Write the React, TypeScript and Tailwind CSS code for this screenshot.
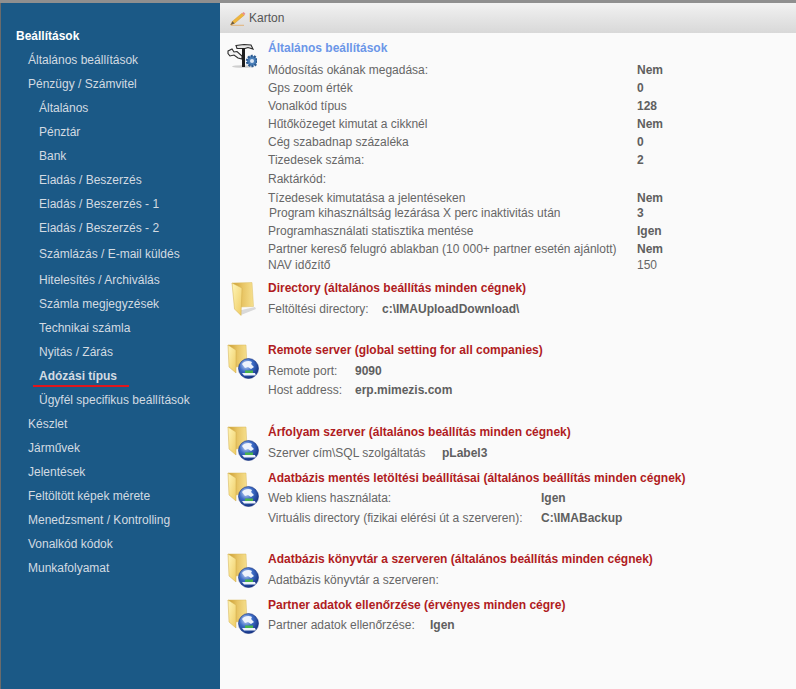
import type { ReactNode } from 'react'

const menu = [
  { label: 'Általános beállítások', level: 1, row: 'h-6' },
  { label: 'Pénzügy / Számvitel', level: 1, row: 'h-6' },
  { label: 'Általános', level: 2, row: 'h-6' },
  { label: 'Pénztár', level: 2, row: 'h-6' },
  { label: 'Bank', level: 2, row: 'h-6' },
  { label: 'Eladás / Beszerzés', level: 2, row: 'h-6' },
  { label: 'Eladás / Beszerzés - 1', level: 2, row: 'h-6' },
  { label: 'Eladás / Beszerzés - 2', level: 2, row: 'h-6' },
  { label: 'Számlázás / E-mail küldés', level: 2, row: 'h-[28px]' },
  { label: 'Hitelesítés / Archiválás', level: 2, row: 'h-6' },
  { label: 'Számla megjegyzések', level: 2, row: 'h-6' },
  { label: 'Technikai számla', level: 2, row: 'h-6' },
  { label: 'Nyitás / Zárás', level: 2, row: 'h-6' },
  { label: 'Adózási típus', level: 2, row: 'h-6', active: true },
  { label: 'Ügyfél specifikus beállítások', level: 2, row: 'h-6' },
  { label: 'Készlet', level: 1, row: 'h-6' },
  { label: 'Járművek', level: 1, row: 'h-6' },
  { label: 'Jelentések', level: 1, row: 'h-6' },
  { label: 'Feltöltött képek mérete', level: 1, row: 'h-6' },
  { label: 'Menedzsment / Kontrolling', level: 1, row: 'h-6' },
  { label: 'Vonalkód kódok', level: 1, row: 'h-6' },
  { label: 'Munkafolyamat', level: 1, row: 'h-6' },
]

const general = [
  { k: 'Módosítás okának megadása:', v: 'Nem', row: 'h-[18px]', bold: true },
  { k: 'Gps zoom érték', v: '0', row: 'h-[18px]', bold: true },
  { k: 'Vonalkód típus', v: '128', row: 'h-[18px]', bold: true },
  { k: 'Hűtőközeget kimutat a cikknél', v: 'Nem', row: 'h-[18px]', bold: true },
  { k: 'Cég szabadnap százaléka', v: '0', row: 'h-[18px]', bold: true },
  { k: 'Tizedesek száma:', v: '2', row: 'h-[18px]', bold: true },
  { k: 'Raktárkód:', v: '', row: 'h-5', bold: true },
  { k: 'Tízedesek kimutatása a jelentéseken', v: 'Nem', row: 'h-[18px]', bold: true },
  { k: 'Program kihasználtság lezárása X perc inaktivitás után', v: '3', row: 'h-3', bold: true, shift: true },
  { k: 'Programhasználati statisztika mentése', v: 'Igen', row: 'h-6', bold: true },
  { k: 'Partner kereső felugró ablakban (10 000+ partner esetén ajánlott)', v: 'Nem', row: 'h-3', bold: true },
  { k: 'NAV időzítő', v: '150', row: 'h-5', bold: false },
]

// ids are shared by every folder on the page, the defs only differ by use
function FolderIcon({ globe = false }: { globe?: boolean }) {
  return (
    <svg width="40" height="40" viewBox="0 2 40 40" className="block overflow-visible">
      <defs>
        <linearGradient id="fback" x1="0" y1="0" x2="1" y2="0">
          <stop offset="0" stopColor="#c99a2e" />
          <stop offset="0.5" stopColor="#e8c565" />
          <stop offset="1" stopColor="#f6e08e" />
        </linearGradient>
        <linearGradient id="ffront" x1="0" y1="0" x2="1" y2="1">
          <stop offset="0" stopColor="#fff6b8" />
          <stop offset="1" stopColor="#efcb62" />
        </linearGradient>
        <radialGradient id="gl" cx="0.38" cy="0.32" r="0.75">
          <stop offset="0" stopColor="#cfdcf6" />
          <stop offset="0.45" stopColor="#3d6cc6" />
          <stop offset="1" stopColor="#0f2a78" />
        </radialGradient>
      </defs>
      {globe ? (
        <g>
          <path d="M3 5 L21 5 L22 26 L10 27 Z" fill="url(#fback)" stroke="#d8b95e" strokeWidth="0.5" />
          <path d="M3 5 L11 10 L11 33 L4 27 Z" fill="url(#ffront)" stroke="#d3ae4c" strokeWidth="0.5" />
          <circle cx="23.5" cy="28.5" r="10" fill="url(#gl)" stroke="#122f7f" strokeWidth="0.6" />
          <path d="M17 24 C19 21 24 20 27 22 L26 24 L29 27 L26 29 L23 27 L20 28 Z" fill="#eef3fc" />
          <rect x="20" y="30.5" width="8" height="2.5" fill="#49b34b" />
          <path d="M17 33 L30 33 L31 35.5 L19 35.5 Z" fill="#eef3fc" />
        </g>
      ) : (
        <g>
          <path d="M12 33 L30 29 L31 31 L16 37 Z" fill="#d9d9d9" />
          <path d="M7 5 L27 4.5 L28.5 28.5 L15 29 Z" fill="url(#fback)" stroke="#dcc06a" strokeWidth="0.5" />
          <path d="M7 5 L17 10 L16 37.5 L9.5 31 Z" fill="url(#ffront)" stroke="#d3ae4c" strokeWidth="0.5" />
        </g>
      )}
    </svg>
  )
}

function ToolsIcon() {
  return (
    <svg width="32" height="32" viewBox="0 0 32 32" className="block">
      <ellipse cx="18" cy="28.5" rx="11" ry="1.3" fill="#cfcfcf" />
      <path d="M11 7.5 L19 6.5 L26 7 L28 11 L23 9.5 L20 10.5 L16.5 10.5 L12 10.5 Z" fill="#e6e6e6" stroke="#2a2a2a" strokeWidth="1.1" />
      <path d="M3 13 L7 11 L9 14 L12 13.5 L17 18 L17 21 L13 20 L9 17 L5 18 L3 15.5 Z" fill="#f3f3f3" stroke="#2a2a2a" strokeWidth="1.1" />
      <rect x="17" y="10" width="3" height="19" fill="#1e1e1e" />
      <circle cx="27" cy="23" r="5" fill="#4a7fb9" stroke="#2d5b91" strokeWidth="2.4" strokeDasharray="2 1.1" />
      <circle cx="27" cy="23" r="2" fill="#dbe7f5" />
    </svg>
  )
}

function PencilIcon() {
  return (
    <svg width="16" height="15" viewBox="0 0 16 15" className="block">
      <path d="M0.5 14 L2.5 10.2 L12 2.2 L14.2 4.2 L4.5 12.4 Z" fill="#efb63c" stroke="#cc8f28" strokeWidth="0.4" />
      <path d="M12 2.2 L13.6 1 L15.4 2.8 L14.2 4.2 Z" fill="#ea8d8d" />
      <path d="M0.5 14 L2.5 10.2 L4.5 12.4 Z" fill="#6b5a44" />
      <path d="M1 14.3 L14 14.3" stroke="#e3a04e" strokeWidth="0.7" />
    </svg>
  )
}

function Section({ title, icon, className, children }: { title: string; icon: ReactNode; className: string; children: ReactNode }) {
  return (
    <section className={`flex ${className}`}>
      <div className="w-12 shrink-0 pl-[5px]">{icon}</div>
      <div className="min-w-0 flex-1">
        <h2 className="h-[19px] text-xs leading-4 font-bold text-[#b01c22] whitespace-nowrap">{title}</h2>
        {children}
      </div>
    </section>
  )
}

function Pair({ k, v, gap, row = 'h-5' }: { k: string; v: string; gap: string; row?: string }) {
  return (
    <div className={`flex items-center ${row} whitespace-nowrap`}>
      <span className={gap}>{k}</span>
      <b className="text-[#5f5f5f]">{v}</b>
    </div>
  )
}

export default function App() {
  return (
    <div className="flex h-[689px] w-[796px] flex-col overflow-hidden bg-[#fafafa] font-['Liberation_Sans',Arial,sans-serif] text-xs text-[#666]">
      <div className="h-[3px] bg-[#8f8f8f]" />
      <div className="flex min-h-0 flex-1">
        <aside className="w-[220px] shrink-0 border-l border-[#6b6b6b] bg-[#1b5986] pt-[21px] text-[#d3dbe2]">
          <div className="flex h-6 items-center pl-[15px] text-xs font-bold text-white">Beállítások</div>
          {menu.map((item) => (
            <div key={item.label} className={`flex items-center ${item.row} ${item.level === 1 ? 'pl-[27px]' : 'pl-[38px]'}`}>
              <span className={item.active ? 'relative font-bold' : ''}>
                {item.label}
                {item.active && <span className="absolute -left-[6px] top-[17px] h-0.5 w-[96px] bg-[#e0161c]" />}
              </span>
            </div>
          ))}
        </aside>

        <main className="min-w-0 flex-1">
          <div className="flex h-[30px] items-center gap-[3px] bg-gradient-to-b from-[#f2f2f2] to-[#d8d8d8] pl-[10px] text-[#555]">
            <PencilIcon />
            <span>Karton</span>
          </div>

          <section className="flex pt-[5px]">
            <div className="w-12 shrink-0 pl-[5px]">
              <ToolsIcon />
            </div>
            <div className="min-w-0 flex-1">
              <h2 className="h-[23px] text-xs leading-5 font-bold text-[#6b96e8]">Általános beállítások</h2>
              {general.map((r) => (
                <div key={r.k} className={`flex ${r.row} items-center whitespace-nowrap`}>
                  <span className={`w-[369px] ${r.shift ? 'pl-px' : ''}`}>{r.k}</span>
                  <span className={r.bold ? 'font-bold text-[#5f5f5f]' : ''}>{r.v}</span>
                </div>
              ))}
            </div>
          </section>

          <Section title="Directory (általános beállítás minden cégnek)" icon={<FolderIcon />} className="mt-[5px] h-[62px]">
            <Pair k="Feltöltési directory:" v="c:\IMAUploadDownload\" gap="w-[114px]" />
          </Section>

          <Section title="Remote server (global setting for all companies)" icon={<FolderIcon globe />} className="h-[82px]">
            <Pair k="Remote port:" v="9090" gap="w-[87px]" />
            <Pair k="Host address:" v="erp.mimezis.com" gap="w-[87px]" row="h-[18px]" />
          </Section>

          <Section title="Árfolyam szerver (általános beállítás minden cégnek)" icon={<FolderIcon globe />} className="h-[46px]">
            <Pair k="Szerver cím\SQL szolgáltatás" v="pLabel3" gap="w-[174px]" />
          </Section>

          <Section title="Adatbázis mentés letöltési beállításai (általános beállítás minden cégnek)" icon={<FolderIcon globe />} className="h-[81px]">
            <Pair k="Web kliens használata:" v="Igen" gap="w-[273px]" row="h-[18px]" />
            <Pair k="Virtuális directory (fizikai elérési út a szerveren):" v="C:\IMABackup" gap="w-[273px]" row="h-[22px]" />
          </Section>

          <Section title="Adatbázis könyvtár a szerveren (általános beállítás minden cégnek)" icon={<FolderIcon globe />} className="h-[46px]">
            <Pair k="Adatbázis könyvtár a szerveren:" v="" gap="w-[200px]" />
          </Section>

          <Section title="Partner adatok ellenőrzése (érvényes minden cégre)" icon={<FolderIcon globe />} className="h-[46px]">
            <Pair k="Partner adatok ellenőrzése:" v="Igen" gap="w-[162px]" row="h-[18px]" />
          </Section>
        </main>
      </div>
    </div>
  )
}
